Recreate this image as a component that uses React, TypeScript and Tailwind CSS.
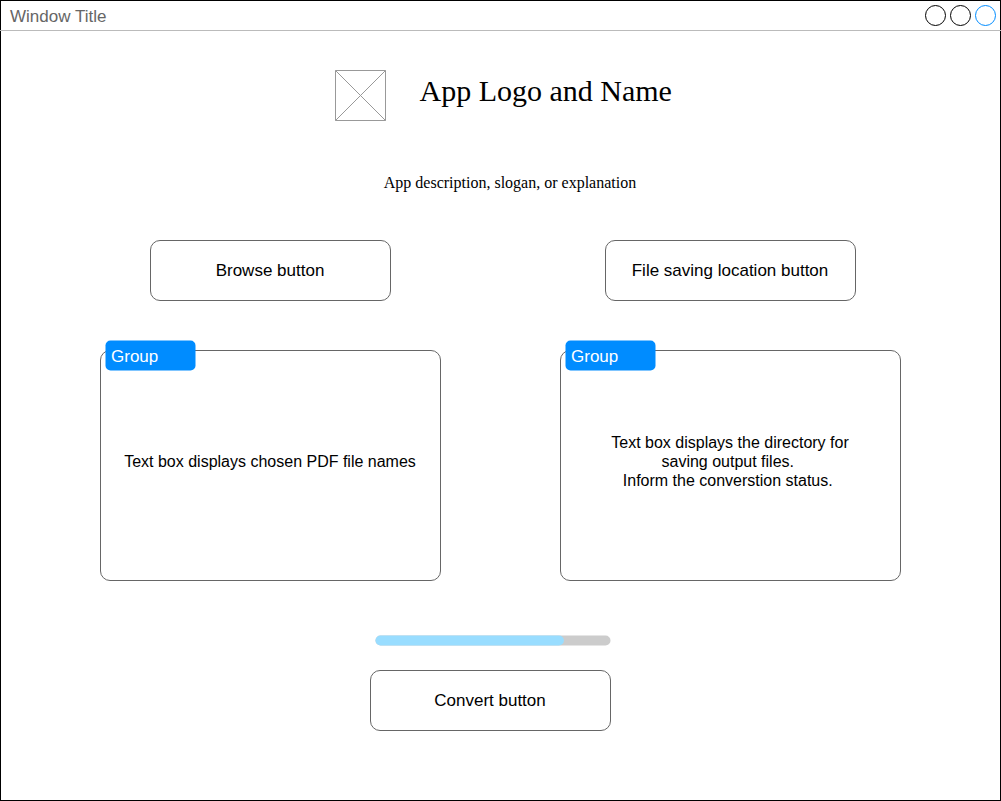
import React from "react";

function PillButton({ label, className }: { label: string; className: string }) {
  return (
    <button className={`h-[61px] shrink-0 rounded-[10px] border border-[#666] bg-white pr-px pt-px text-[17px] leading-5 ${className}`}>
      {label}
    </button>
  );
}

function GroupPanel({ className, children }: { className: string; children: React.ReactNode }) {
  return (
    <section className={`relative flex h-[231px] w-[341px] shrink-0 justify-center rounded-[10px] border border-[#666] pr-px text-center text-base leading-[19px] ${className}`}>
      <div className="absolute -top-[11px] left-[4px] grid h-[31px] w-[91px] items-center text-[17px] text-white">
        <svg className="col-start-1 row-start-1" width="91" height="31">
          <rect x=".5" y=".5" width="90" height="30" rx="5" fill="#008cff" />
        </svg>
        <span className="col-start-1 row-start-1 pl-[6px] pt-px text-left">Group</span>
      </div>
      {children}
    </section>
  );
}

export default function App() {
  return (
    <div className="flex h-[801px] w-[1001px] flex-col border border-black bg-white font-['Liberation_Sans',Arial,sans-serif] text-black">
      <header className="-mx-px flex h-[30px] shrink-0 items-center justify-between border-b border-[#bbb] pl-[10px] pr-px text-[17px] text-[#666]">
        <span className="pt-[3px]">Window Title</span>
        <svg width="80" height="29" viewBox="920 1 80 29" fill="none">
          <circle cx="935.5" cy="15.5" r="10" stroke="#000" />
          <circle cx="960.5" cy="15.5" r="10" stroke="#000" />
          <circle cx="985.5" cy="15.5" r="10" stroke="#008cff" />
        </svg>
      </header>
      <div className="mt-[39px] flex h-[51px] pl-[334px] font-['Liberation_Serif',serif]">
        <svg width="51" height="51" fill="none" stroke="#999">
          <path d="M.5 .5H50.5V50.5H.5ZM.5 .5L50.5 50.5M50.5 .5L.5 50.5" />
        </svg>
        <h1 className="ml-[33.5px] mt-[3px] text-[30px] leading-9 whitespace-nowrap">App Logo and Name</h1>
      </div>
      <p className="mt-[52px] h-5 pl-[382.8px] font-['Liberation_Serif',serif] text-base leading-5">
        App description, slogan, or explanation
      </p>
      <div className="mt-[47px] flex pl-[149px]">
        <PillButton label="Browse button" className="w-[241px]" />
        <PillButton label="File saving location button" className="ml-[214px] w-[251px]" />
      </div>
      <div className="mt-[49px] flex pl-[99px]">
        <GroupPanel className="pt-[101px]">Text box displays chosen PDF file names</GroupPanel>
        <GroupPanel className="ml-[119px] pt-[82px]">
          <div>
            <p>Text box displays the directory for</p>
            <p className="pr-[4.5px]">saving output files.</p>
            <p className="pr-[4.5px]">Inform the converstion status.</p>
          </div>
        </GroupPanel>
      </div>
      <svg className="ml-[374px] mt-[54px] shrink-0" width="236" height="11" fill="none" strokeWidth="10" strokeLinecap="round">
        <path d="M5.5 5.5H230.5" stroke="#ccc" />
        <path d="M5.5 5.5H183.9" stroke="#9df" />
      </svg>
      <div className="mt-6 pl-[369px]">
        <PillButton label="Convert button" className="w-[241px]" />
      </div>
    </div>
  );
}
